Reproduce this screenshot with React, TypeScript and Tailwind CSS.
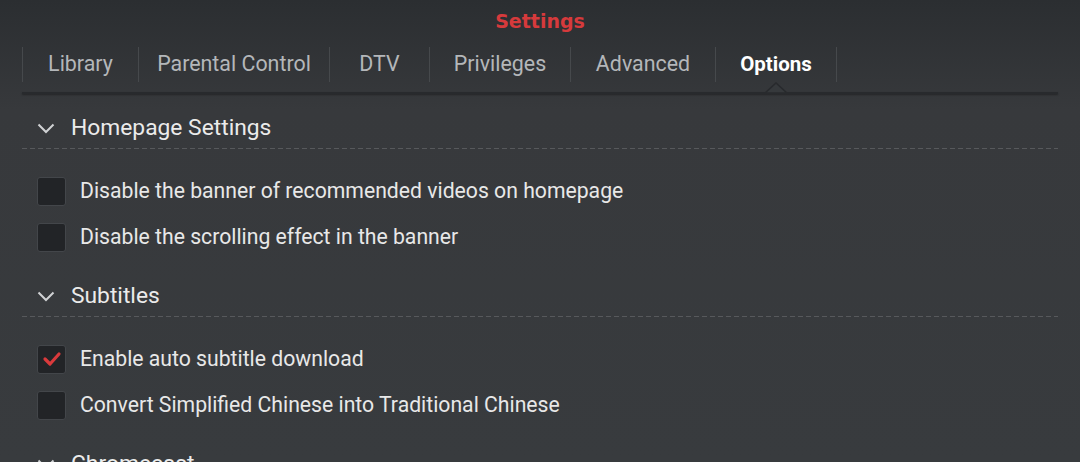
import { useState } from 'react';

const tabs = [
  { label: 'Library', w: 'w-[116px]' },
  { label: 'Parental Control', w: 'w-[191px]' },
  { label: 'DTV', w: 'w-[100px]' },
  { label: 'Privileges', w: 'w-[141px]' },
  { label: 'Advanced', w: 'w-[145px]' },
  { label: 'Options', w: 'w-[122px]' },
];

type Item = { id: string; label: string; checked: boolean };

const initialSections: { title: string; items: Item[] }[] = [
  {
    title: 'Homepage Settings',
    items: [
      { id: 'banner', label: 'Disable the banner of recommended videos on homepage', checked: false },
      { id: 'scroll', label: 'Disable the scrolling effect in the banner', checked: false },
    ],
  },
  {
    title: 'Subtitles',
    items: [
      { id: 'autosub', label: 'Enable auto subtitle download', checked: true },
      { id: 'convert', label: 'Convert Simplified Chinese into Traditional Chinese', checked: false },
    ],
  },
  {
    title: 'Chromecast',
    items: [{ id: 'cast', label: 'Enable Chromecast', checked: false }],
  },
];

function Chevron() {
  return (
    <svg width="18" height="11" viewBox="0 0 18 11" className="shrink-0">
      <polyline points="1.5,1.5 9,9 16.5,1.5" fill="none" stroke="#d0d2d4" strokeWidth="2" />
    </svg>
  );
}

function Checkbox({ checked, onClick }: { checked: boolean; onClick: () => void }) {
  return (
    <button
      onClick={onClick}
      className="w-[29px] h-[29px] shrink-0 rounded-[3px] border border-[#43464a] bg-[#222427] flex items-center justify-center"
    >
      {checked && (
        <svg width="20" height="16" viewBox="0 0 20 16">
          <polyline points="3,8 8,13 17,3" fill="none" stroke="#d93a3c" strokeWidth="3.2" strokeLinecap="round" strokeLinejoin="round" />
        </svg>
      )}
    </button>
  );
}

export default function App() {
  const [active, setActive] = useState('Options');
  const [sections, setSections] = useState(initialSections);

  const toggle = (id: string) => {
    setSections((prev) =>
      prev.map((s) => ({
        ...s,
        items: s.items.map((i) => (i.id === id ? { ...i, checked: !i.checked } : i)),
      }))
    );
  };

  return (
    <div
      className="w-[1080px] h-[462px] overflow-hidden bg-[linear-gradient(to_bottom,#2b2e31_0px,#37393c_110px,#383b3e_100%)]"
      style={{ fontFamily: 'Roboto, "Liberation Sans", sans-serif' }}
    >
      {/* title */}
      <div className="h-[47px] pt-[7px] flex justify-center">
        <h1
          className="text-[19px] leading-[28px] font-bold text-[#d63a3c]"
          style={{ fontFamily: '"DejaVu Sans", Verdana, sans-serif' }}
        >
          Settings
        </h1>
      </div>

      {/* tabs */}
      <div className="mx-[22px] relative">
        <div className="flex h-[45px]">
          {tabs.map((t, idx) => {
            const isActive = t.label === active;
            return (
              <button
                key={t.label}
                onClick={() => setActive(t.label)}
                className={`${t.w} h-[35px] flex items-center justify-center border-l border-[#46494c] ${
                  idx === tabs.length - 1 ? 'border-r' : ''
                } ${isActive ? 'text-white font-bold text-[20.5px]' : 'text-[#b4b7ba] text-[21.4px]'}`}
              >
                {t.label}
              </button>
            );
          })}
        </div>
        <div className="h-[2px] bg-[#282a2d] shadow-[0_1px_2px_rgba(0,0,0,0.35)]" />
        <svg width="22" height="11" viewBox="0 0 22 11" className="absolute left-[743px] top-[35px]">
          <polygon points="0,11 11,1 22,11" fill="#36393c" stroke="#282a2d" strokeWidth="1.6" />
        </svg>
      </div>

      {/* sections */}
      <div className="mx-[22px] mt-[14px]">
        {sections.map((s) => (
          <div key={s.title}>
            <div className="h-[40px] flex items-center gap-[16px] pl-[15px] pt-[1px]">
              <Chevron />
              <span className="text-[22.8px] text-[#ebebeb]">{s.title}</span>
            </div>
            <div className="h-px bg-[linear-gradient(to_right,#57595c_5px,transparent_5px)] bg-[length:8px_1px]" />
            <div className="pt-[19px] pb-[16px]">
              {s.items.map((i) => (
                <div key={i.id} className="h-[46px] flex items-center gap-[14px] pl-[15px]">
                  <Checkbox checked={i.checked} onClick={() => toggle(i.id)} />
                  <span className="text-[21.2px] text-[#e8e8e8]">{i.label}</span>
                </div>
              ))}
            </div>
          </div>
        ))}
      </div>
    </div>
  );
}
